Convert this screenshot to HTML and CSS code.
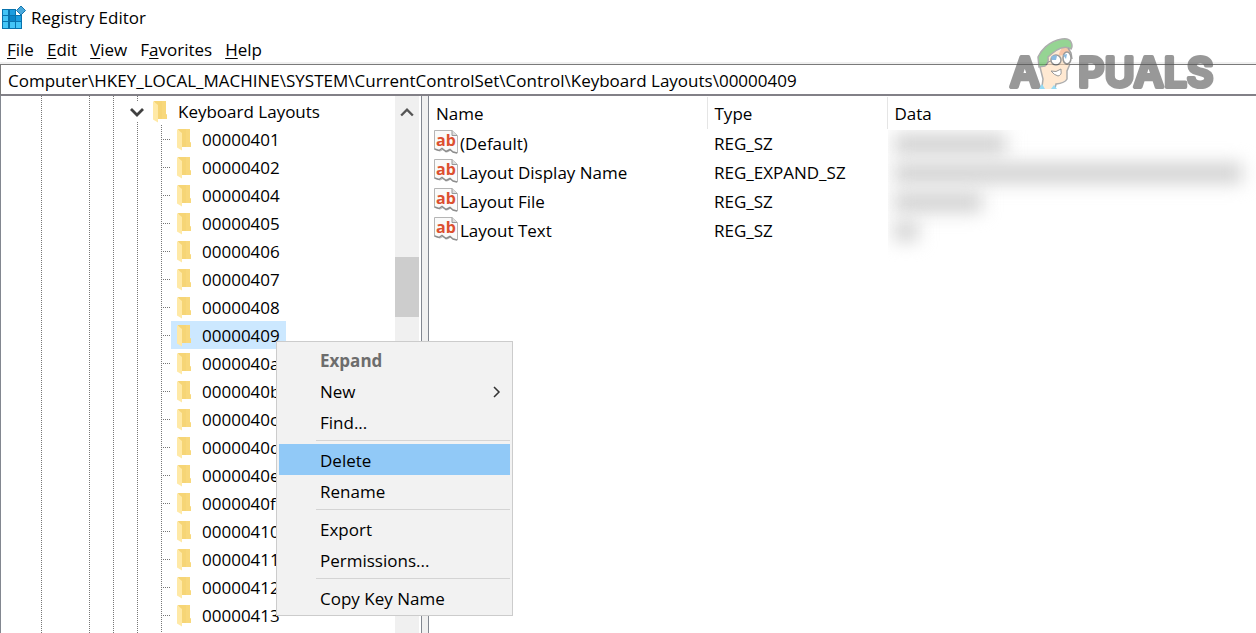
FILE: index.html
```html
<!DOCTYPE html>
<html lang="en">
<head>
    <meta charset="UTF-8">
    <meta name="viewport" content="width=device-width, initial-scale=1.0">
    <title>Registry Editor</title>
    <link rel="stylesheet" href="styles.css">
</head>
<body>
    <svg class="symbols" aria-hidden="true">
        <symbol id="folder" viewBox="0 0 14 22">
            <path d="M1 0H13V13L14 14V18H5Z" fill="#f6d576"/>
            <path d="M9 0H13V13L14 14V18H9Z" fill="#f8d87c"/>
            <path d="M0 0L5 4V21.500L0 18.500Z" fill="#ffe9a6"/>
        </symbol>
        <symbol id="page" viewBox="0 0 24 24">
            <path d="M.5 .5H18L23.500 5.500V23L19 22L17 20L13 22L9 19.500L6 21L.5 19Z" fill="#fafafa" stroke="#b5b5b5"/>
            <path d="M.5 19L5 20.500L8 18.500L12 21.500L16 19.500L19 22L23 23" fill="none" stroke="#8d8d8d" stroke-width="1.500"/>
            <path d="M18 .5V5.500H23" fill="#ddd" stroke="#999"/>
        </symbol>
    </svg>

    <div class="window">
        <header class="title-bar">
            <svg class="app-icon" viewBox="0 0 24 24" aria-hidden="true">
                <path d="M0 3H14V9H20V23H0Z" fill="#0873ae"/>
                <path d="M1 4H6V9H1ZM1 10H6V15H1ZM8 16H13V22H8ZM14 16H19V22H14ZM1 16H6V22H1Z" fill="#43c5f7"/>
                <path d="M8 4H13V9H8ZM14 10H19V15H14Z" fill="#1b9de0"/>
                <path d="M8 10H13V15H8Z" fill="#0a86c9"/>
                <path d="M19 0L23.500 4.500L19 9L14.500 4.500Z" fill="#4aa9dc" stroke="#1678b0"/>
            </svg>
            <h1>Registry Editor</h1>
        </header>
        <nav class="menu-bar">
            <button type="button"><u>F</u>ile</button>
            <button type="button"><u>E</u>dit</button>
            <button type="button"><u>V</u>iew</button>
            <button type="button">F<u>a</u>vorites</button>
            <button type="button"><u>H</u>elp</button>
        </nav>
        <input class="address" type="text" aria-label="Address" value="Computer\HKEY_LOCAL_MACHINE\SYSTEM\CurrentControlSet\Control\Keyboard Layouts\00000409">

        <main class="panes">
            <section class="tree">
                <div class="branch">
                    <svg class="chevron" viewBox="0 0 14 10" aria-hidden="true"><path d="M1 2L7 8L13 2" fill="none" stroke="#404040" stroke-width="2.800"/></svg>
                    <svg class="folder"><use href="#folder"/></svg>
                    <span>Keyboard Layouts</span>
                </div>
                <ul class="keys">
                    <li><span class="key"><svg class="folder"><use href="#folder"/></svg>00000401</span></li>
                    <li><span class="key"><svg class="folder"><use href="#folder"/></svg>00000402</span></li>
                    <li><span class="key"><svg class="folder"><use href="#folder"/></svg>00000404</span></li>
                    <li><span class="key"><svg class="folder"><use href="#folder"/></svg>00000405</span></li>
                    <li><span class="key"><svg class="folder"><use href="#folder"/></svg>00000406</span></li>
                    <li><span class="key"><svg class="folder"><use href="#folder"/></svg>00000407</span></li>
                    <li><span class="key"><svg class="folder"><use href="#folder"/></svg>00000408</span></li>
                    <li><span class="key selected"><svg class="folder"><use href="#folder"/></svg>00000409</span></li>
                    <li><span class="key"><svg class="folder"><use href="#folder"/></svg>0000040a</span></li>
                    <li><span class="key"><svg class="folder"><use href="#folder"/></svg>0000040b</span></li>
                    <li><span class="key"><svg class="folder"><use href="#folder"/></svg>0000040c</span></li>
                    <li><span class="key"><svg class="folder"><use href="#folder"/></svg>0000040d</span></li>
                    <li><span class="key"><svg class="folder"><use href="#folder"/></svg>0000040e</span></li>
                    <li><span class="key"><svg class="folder"><use href="#folder"/></svg>0000040f</span></li>
                    <li><span class="key"><svg class="folder"><use href="#folder"/></svg>00000410</span></li>
                    <li><span class="key"><svg class="folder"><use href="#folder"/></svg>00000411</span></li>
                    <li><span class="key"><svg class="folder"><use href="#folder"/></svg>00000412</span></li>
                    <li><span class="key"><svg class="folder"><use href="#folder"/></svg>00000413</span></li>
                </ul>
            </section>
            <div class="scrollbar">
                <button type="button" aria-label="Scroll up">
                    <svg viewBox="0 0 12 10"><path d="M1 8L6 3L11 8" fill="none" stroke="#555" stroke-width="2"/></svg>
                </button>
                <div class="thumb"></div>
            </div>
            <div class="splitter"></div>
            <section class="values">
                <table>
                    <thead>
                        <tr><th class="col-name">Name</th><th class="col-type">Type</th><th>Data</th></tr>
                    </thead>
                    <tbody>
                        <tr><td><span class="value"><span class="icon"><svg><use href="#page"/></svg><b>ab</b></span>(Default)</span></td><td>REG_SZ</td><td class="data"><span class="blur medium"></span></td></tr>
                        <tr><td><span class="value"><span class="icon"><svg><use href="#page"/></svg><b>ab</b></span>Layout Display Name</span></td><td>REG_EXPAND_SZ</td><td class="data"><span class="blur full"></span></td></tr>
                        <tr><td><span class="value"><span class="icon"><svg><use href="#page"/></svg><b>ab</b></span>Layout File</span></td><td>REG_SZ</td><td class="data"><span class="blur short"></span></td></tr>
                        <tr><td><span class="value"><span class="icon"><svg><use href="#page"/></svg><b>ab</b></span>Layout Text</span></td><td>REG_SZ</td><td class="data"><span class="blur tiny"></span></td></tr>
                    </tbody>
                </table>
            </section>
        </main>
    </div>

    <div class="context-menu">
        <button type="button" class="default" disabled>Expand</button>
        <button type="button">New
            <svg viewBox="0 0 8 12" aria-hidden="true"><path d="M1 1L6 6L1 11" fill="none" stroke="#333" stroke-width="1.500"/></svg>
        </button>
        <button type="button">Find...</button>
        <hr>
        <button type="button" class="active">Delete</button>
        <button type="button">Rename</button>
        <hr>
        <button type="button">Export</button>
        <button type="button">Permissions...</button>
        <hr>
        <button type="button">Copy Key Name</button>
    </div>

    <svg class="watermark" viewBox="-10 -4 230 70" role="img" aria-label="Appuals">
        <text x="2" y="50">A</text>
        <path d="M33 52L35 42L32 30L38 18L60 10L62 27L59 34L59 42L53 46L47 48L46 52Z" fill="#ffdcb5"/>
        <path d="M34 50L35 42L32 30M62 27L59 34L59 42Q57 46 48 47L47 51" fill="none" stroke="#777" stroke-width="1.500"/>
        <path d="M54 10L61 9L62 17L50 19Z" fill="#f5a070"/>
        <path d="M30 20C32 15 40 4 54 2Q61 1 63 5Q65 9 63 12Q57 8 49 13Q43 17 40 20Q41 26 37 29L31 30Z" fill="#4fb84c" stroke="#777" stroke-width="1.500"/>
        <path d="M60 11L63 16L64 22" fill="none" stroke="#666" stroke-width="1.500"/>
        <ellipse cx="48" cy="23" rx="5" ry="5" fill="#fff" stroke="#555" stroke-width="1.500"/>
        <ellipse cx="59" cy="21" rx="4" ry="6" fill="#fff" stroke="#555" stroke-width="1.500"/>
        <path d="M38 28L40 25L43 24" fill="none" stroke="#555"/>
        <path d="M43 20Q46 17 49 19L48 23L44 23ZM55 18L59 17L58 22Z" fill="#3f8fd0"/>
        <path d="M43 34Q48 36 53 32L53 34Q54 38 50 39Q46 38 43 34Z" fill="#fff" stroke="#555"/>
        <path d="M31 52L34 47L37 52ZM43 52L46 48L49 52Z" fill="#52c4ef"/>
        <text x="70" y="50">PUALS</text>
    </svg>
</body>
</html>
```
FILE: styles.css
```css
* {
    margin: 0;
    padding: 0;
    box-sizing: border-box;
}
body {
    background: #fff;
    color: #000;
    font-family: "Open Sans", "Noto Sans", sans-serif;
    font-size: 17px;
    line-height: 28px;
    overflow: hidden;
}
button, input {
    font: inherit;
    color: inherit;
    border: none;
    background: none;
}
.symbols {
    position: absolute;
    width: 0;
    height: 0;
}
.window {
    display: flex;
    flex-direction: column;
    height: 100vh;
}

/* title and menus */
.title-bar {
    display: flex;
    align-items: center;
    gap: 5px;
    height: 36px;
    padding-left: 2px;
}
.title-bar h1 {
    font-size: 17px;
    font-weight: normal;
}
.app-icon {
    width: 24px;
    height: 24px;
}
.menu-bar {
    display: flex;
    height: 28px;
    padding-left: 1px;
    border-bottom: 2px solid #f0f0f0;
}
.menu-bar button {
    padding: 0 7px 0 6px;
}
.menu-bar u {
    text-underline-offset: 2px;
}
.address {
    width: 100%;
    height: 32px;
    padding: 1px 7px 0;
    border: 1px solid #7a7a7a;
    border-right: none;
    border-bottom: 2px solid #828087;
    outline: none;
}

/* key tree */
.panes {
    display: flex;
    flex: 1;
    min-height: 0;
    border-left: 1px solid #828790;
}
.tree {
    --dots: repeating-linear-gradient(#777 0 1px, transparent 1px 2px);
    width: 394px;
    padding-top: 1px;
    overflow: hidden;
    background-image: var(--dots), var(--dots), var(--dots), var(--dots);
    background-size: 1px 100%;
    background-position: 40px 0, 88px 0, 112px 0, 136px 0;
    background-repeat: no-repeat;
}
.branch {
    display: flex;
    align-items: center;
    height: 28px;
    padding: 1px 0 0 129px;
}
.chevron {
    width: 14px;
    height: 20px;
    margin-right: 9px;
    background: #fff;
}
.folder {
    width: 14px;
    height: 22px;
    margin-right: 11px;
}
.keys {
    height: 100%;
    margin-left: 160px;
    list-style: none;
    background: var(--dots) 0 0 / 1px 100% no-repeat;
}
.keys li {
    display: flex;
    align-items: center;
    height: 28px;
}
.keys li::before {
    content: "";
    width: 10px;
    height: 1px;
    background: repeating-linear-gradient(90deg, #777 0 1px, transparent 1px 2px);
}
.key {
    display: flex;
    align-items: center;
    height: 28px;
    padding: 1px 6px 0;
}
.selected {
    background: #cce8ff;
}
.scrollbar {
    width: 26px;
    background: #f0f0f0;
    border-right: 2px solid #fff;
}
.scrollbar button {
    display: flex;
    align-items: center;
    justify-content: center;
    width: 24px;
    height: 32px;
}
.scrollbar svg {
    width: 14px;
    height: 12px;
}
.thumb {
    width: 24px;
    height: 60px;
    margin-top: 129px;
    background: #cdcdcd;
}
.splitter {
    width: 8px;
    background: #f0f0f0;
    border: 1px solid #828790;
    border-width: 0 1px;
}

/* value list */
.values {
    flex: 1;
    padding-top: 1px;
}
table {
    width: 100%;
    table-layout: fixed;
    border-collapse: collapse;
}
th {
    height: 32px;
    padding: 2px 0 0 7px;
    border-right: 1px solid #e5e5e5;
    font-weight: normal;
    text-align: left;
}
th:last-child {
    border-right: none;
}
.col-name {
    width: 278px;
}
.col-type {
    width: 180px;
}
td {
    height: 29px;
    padding-left: 7px;
}
td:first-child {
    padding-left: 5px;
}
.value {
    display: flex;
    align-items: center;
    gap: 2px;
}
.icon {
    display: grid;
    width: 24px;
    height: 27px;
}
.icon > * {
    grid-area: 1 / 1;
}
.icon svg {
    width: 24px;
    height: 24px;
}
.icon b {
    color: #dc5030;
    font-size: 16px;
    line-height: 20px;
    text-align: center;
}
.data {
    clip-path: inset(-29px 0 -29px 1px);
}
tr:first-child .data {
    clip-path: inset(1px 0 -29px 1px);
}
.blur {
    display: block;
    height: 20px;
    background: #d0d0d0;
    filter: blur(9px);
}
.full {
    width: 96%;
}
.medium {
    width: 112px;
}
.short {
    width: 88px;
}
.tiny {
    width: 24px;
}

/* right-click menu, opened over the tree */
.context-menu {
    position: absolute;
    left: 276px;
    top: 341px;
    width: 237px;
    padding: 2px;
    border: 1px solid #ccc;
    background: #f2f2f2;
}
.context-menu button {
    display: flex;
    align-items: center;
    justify-content: space-between;
    width: 100%;
    height: 31px;
    padding: 2px 9px 0 41px;
    text-align: left;
}
.context-menu svg {
    width: 8px;
    height: 12px;
}
.context-menu .default {
    color: #6d6d6d;
    font-weight: bold;
}
.context-menu .active {
    background: #91c9f7;
}
.context-menu hr {
    margin: 3px 0 3px 37px;
    border: none;
    border-top: 1px solid #d4d4d4;
}

/* site logo */
.watermark {
    position: absolute;
    top: 33px;
    right: 28px;
    width: 230px;
    height: 70px;
    opacity: .6;
}
.watermark text {
    font: 600 41px Inter, sans-serif;
    fill: #555;
    stroke: #555;
    stroke-width: 4;
    stroke-linejoin: round;
}
```
